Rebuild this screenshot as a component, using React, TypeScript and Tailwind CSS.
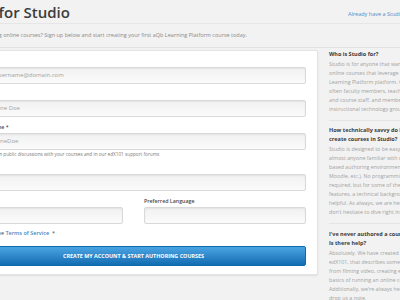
import React from "react";

const Field = ({ label, placeholder }: { label: string; placeholder?: string }) => (
  <div className="flex flex-col">
    <label className="text-[5.3px] leading-[8px] font-semibold text-[#4a4a4a] mb-[2px] whitespace-nowrap">{label}</label>
    <div className="h-[17px] rounded-[2px] border border-[#d9d9d9] bg-gradient-to-b from-[#f1f1f1] to-[#fbfbfb] shadow-[inset_0_1px_2px_rgba(0,0,0,0.06)] flex items-center pl-[6px] text-[6px] text-[#a3a3a3] whitespace-nowrap overflow-hidden">
      {placeholder}
    </div>
  </div>
);

const Side = ({ title, lines }: { title: string[]; lines: string[] }) => (
  <div>
    <div className="mb-[1px]">
      {title.map((t) => (
        <div key={t} className="text-[5.5px] leading-[9px] font-bold text-[#3c3c3c] whitespace-nowrap">{t}</div>
      ))}
    </div>
    {lines.map((l) => (
      <div key={l} className="text-[5.3px] leading-[9px] text-[#a2a2a2] whitespace-nowrap">{l}</div>
    ))}
  </div>
);

export default function App() {
  return (
    <div className="w-[400px] h-[300px] overflow-hidden bg-[#f2f2f2] font-['Open_Sans',sans-serif]">
      <div className="ml-[-56px] w-[640px]">
        <div className="grid grid-cols-[404px_auto] items-center h-[24px] border-b border-[#e6e6e6]">
          <h1 className="ml-[-4px] text-[15px] font-semibold text-[#3c3c3c] whitespace-nowrap leading-[24px]">Sign Up for Studio</h1>
          <a className="pt-[5px] text-[5.5px] text-[#4a8fcf] whitespace-nowrap">Already have a Studio Account? Sign In</a>
        </div>
        <div className="h-[24px] flex items-center border-b border-[#e2e2e2] text-[5.5px] text-[#8a8a8a] whitespace-nowrap">
          Ready to start creating online courses? Sign up below and start creating your first aQb Learning Platform course today.
        </div>
        <div className="flex items-start gap-[11px] mt-[2px]">
          <div className="w-[374px] shrink-0 bg-white border border-[#e3e3e3] rounded-[2px] shadow-[0_1px_2px_rgba(0,0,0,0.08)] pl-[16px] pr-[11px] pt-[6px] pb-[8px]">
            <div className="flex flex-col gap-[6px]">
              <Field label="Email Address" placeholder="example: username@domain.com" />
              <Field label="Full Name" placeholder="example: Jane Doe" />
              <div className="flex flex-col">
                <Field label="Public Username *" placeholder="example: JaneDoe" />
                <div className="text-[4.7px] leading-[7px] mt-[1px] text-[#7a7a7a] whitespace-nowrap">This will be used in public discussions with your courses and in our edX101 support forums</div>
              </div>
              <Field label="Password" />
              <div className="grid grid-cols-2 gap-[21px]">
                <Field label="Location" />
                <Field label="Preferred Language" />
              </div>
              <div className="flex items-center gap-[2px] mt-[-1px] text-[5.5px] leading-[8px] text-[#4a4a4a] whitespace-nowrap">
                <span className="w-[7px] h-[7px] border border-[#bbb] bg-white rounded-[1px]" />
                <span>I agree to the <span className="font-semibold text-[#3d87c6]">Terms of Service</span> &nbsp;*</span>
              </div>
              <button className="mt-[3px] h-[20px] rounded-[2px] border border-[#0d6aad] bg-gradient-to-b from-[#4aa4e2] to-[#0e6db2] text-white text-[5.4px] font-bold uppercase whitespace-nowrap">
                Create My Account &amp; Start Authoring Courses
              </button>
            </div>
          </div>
          <div className="w-[220px] shrink-0 flex flex-col">
            <Side
              title={["Who is Studio for?"]}
              lines={[
                "Studio is for anyone that wants to create",
                "online courses that leverage the global",
                "Learning Platform platform. Our users are",
                "often faculty members, teaching assistants",
                "and course staff, and members of",
                "instructional technology groups within",
              ]}
            />
            <div className="mt-[6px] mb-[5px] border-t border-[#e4e4e4]" />
            <Side
              title={["How technically savvy do I need to be to", "create courses in Studio?"]}
              lines={[
                "Studio is designed to be easy to use by",
                "almost anyone familiar with web-",
                "based authoring environments (Wordpress,",
                "Moodle, etc.). No programming knowledge is",
                "required, but for some of the more advanced",
                "features, a technical background would be",
                "helpful. As always, we are here to help, so",
                "don't hesitate to dive right in.",
              ]}
            />
            <div className="mt-[6px] mb-[6px] border-t border-[#e4e4e4]" />
            <Side
              title={["I've never authored a course online before.", "Is there help?"]}
              lines={[
                "Absolutely. We have created an online course,",
                "edX101, that describes some best practices:",
                "from filming video, creating exercises, to the",
                "basics of running an online course.",
                "Additionally, we're always here to help, just",
                "drop us a note.",
              ]}
            />
          </div>
        </div>
      </div>
    </div>
  );
}
